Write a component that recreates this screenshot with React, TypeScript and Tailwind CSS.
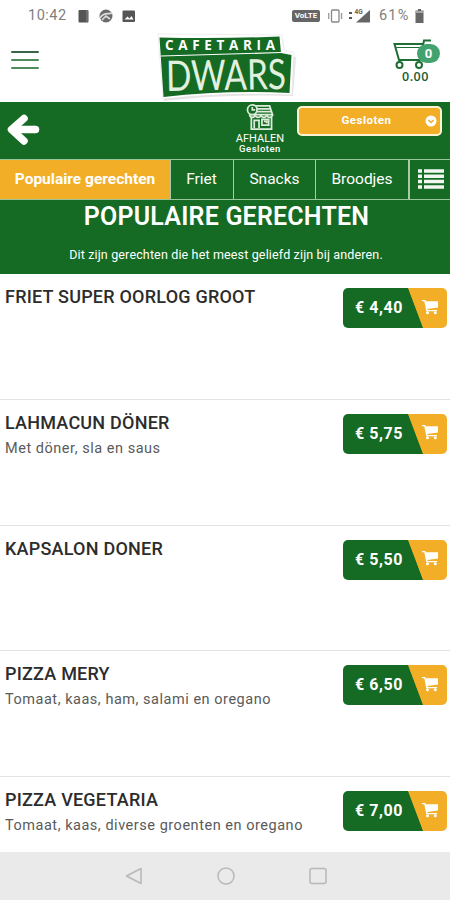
import React from "react";

interface Dish {
  name: string;
  description?: string;
  price: string;
}

const DISHES: Dish[] = [
  { name: "FRIET SUPER OORLOG GROOT", price: "4,40" },
  { name: "LAHMACUN DÖNER", description: "Met döner, sla en saus", price: "5,75" },
  { name: "KAPSALON DONER", price: "5,50" },
  { name: "PIZZA MERY", description: "Tomaat, kaas, ham, salami en oregano", price: "6,50" },
  { name: "PIZZA VEGETARIA", description: "Tomaat, kaas, diverse groenten en oregano", price: "7,00" },
];

function StatusBar() {
  return (
    <div className="flex h-8 items-center justify-between pl-[28px] pr-[26px] text-[#808080]">
      <div className="flex items-center">
        <span className="w-[50px] text-[14.5px] tracking-[0.5px]">10:42</span>
        <svg width="62" height="16" viewBox="0 0 62 16">
          <rect x="0.5" y="2" width="10" height="12.5" rx="1" fill="#555" />
          <path d="M9 2v12.5" stroke="#888" />
          <circle cx="28" cy="8" r="6.5" fill="#6b6b6b" />
          <path d="M22 10c4-7 9-3 12-5M24 12l4-4 4 3" stroke="#ddd" strokeWidth="1.6" fill="none" />
          <rect x="44.5" y="2.5" width="12.5" height="11.5" rx="1" fill="#555" />
          <path d="M46.5 11.5l3-3 2 2 2-2.5 2 3.5z" fill="#fff" />
        </svg>
      </div>
      <div className="flex items-center">
        <span className="mr-[8px] flex h-[12px] w-[28px] items-center justify-center rounded-[2px] bg-[#666] text-[8px] font-bold text-white">VoLTE</span>
        <svg className="mr-[8px]" width="43" height="16" viewBox="0 0 43 16">
          <rect x="3.5" y="2" width="7.5" height="12" rx="1" fill="none" stroke="#888" strokeWidth="1.3" />
          <path d="M0.7 5v6M13.5 5v6" stroke="#999" strokeWidth="1.3" />
          <path d="M21 5h3M21 10h3" stroke="#555" strokeWidth="2" />
          <path d="M42 2v12.5H28z" fill="#666" />
          <text x="26.5" y="6" fontSize="6.5" fontWeight="700" fill="#666">4G</text>
        </svg>
        <span className="mr-[4px] w-[32px] text-[14.5px] tracking-[1.2px]">61%</span>
        <svg width="9" height="14" viewBox="0 0 9 14">
          <path d="M3 0h3v1.5h2.5V14H0.5V1.5H3z" fill="#666" />
          <path d="M1 3h7" stroke="#bbb" strokeWidth="1.5" />
        </svg>
      </div>
    </div>
  );
}

function Logo() {
  return (
    <svg width="142" height="70" viewBox="0 0 142 70">
      <path d="M5 4 128 7 130 22 141 25 138 64Q70 62 9 69z" fill="#000" opacity="0.1" />
      <path d="M3 2 127 3 129 18 139 20 137 63Q70 60 8 67z" fill="#fff" stroke="#ddd" strokeWidth="0.5" />
      <path d="M4.5 5.5Q66 7 124.5 4.5L126 21 136.5 23 134.500 61Q70 58 8.500 65z" fill="#156b24" />
      <path d="M6 24 126 20.500" stroke="#fff" strokeWidth="1.2" />
      <text x="10" y="17.5" textLength="110" lengthAdjust="spacing" fontFamily="'Open Sans', sans-serif" fontWeight="700" fontSize="13.5" fill="#fff">
        CAFETARIA
      </text>
      <text x="11" y="58" textLength="120" lengthAdjust="spacingAndGlyphs" fontFamily="Lato, sans-serif" fontWeight="400" fontSize="42" fill="#e2f0df" transform="rotate(-1 70 45)">
        DWARS
      </text>
    </svg>
  );
}

function CartSummary() {
  return (
    <div className="relative w-[48px]">
      <svg width="48" height="31" viewBox="0 0 48 31">
        <g fill="none" stroke="#1c6e35" strokeWidth="2">
          <path d="M38 1.5h-7l-4 19.5H6L1.5 5H30" />
          <path d="M3 8.5h26" strokeWidth="1" />
          <circle cx="6.5" cy="26" r="3" />
          <circle cx="26" cy="26" r="3" />
        </g>
      </svg>
      <span className="absolute left-[24px] top-[5px] flex h-[19px] w-[23px] items-center justify-center rounded-full bg-[#43a36f] text-[13px] font-bold text-white">0</span>
      <div className="-mt-px ml-[9px] font-['Open_Sans',sans-serif] text-[12.5px] font-semibold leading-[15px] tracking-[0.5px] text-[#1c5b36]">0.00</div>
    </div>
  );
}

function ShopIcon() {
  return (
    <svg width="30" height="26" viewBox="0 0 30 27" fill="none" stroke="#dcecdb" strokeWidth="1.8">
      <path d="M10 2h15l3 9H4M6 13v13h21V13M11 5h15M12 8h15" />
      <path d="M4 11c1 4 5 4 6 0 1 4 5 4 6 0 1 4 5 4 6 0 1 4 5 4 6 0" />
      <path d="M9 25v-8h5v8M17 16h7v6h-7zM19 18h3v2" />
      <circle cx="7" cy="6" r="5" fill="#156b24" />
      <path d="M7 3v3h3" />
    </svg>
  );
}

function PriceButton({ price }: { price: string }) {
  return (
    <button className="flex h-10 w-[104px] shrink-0 items-center justify-between rounded-[5px] bg-[linear-gradient(69.4deg,#156b24_74.5px,#f2ae27_75.3px)] pl-[12px] pr-[9px]">
      <span className="whitespace-nowrap text-[16px] font-bold tracking-[0.55px] text-white">€ {price}</span>
      <svg className="mb-[3px]" width="16" height="16" viewBox="0 0 16 16" fill="#fff">
        <path d="M0 1h3.3l.4 1.3H16v6.2L5.300 9.900l.3 1.100H15v1.300H4.300L2.300 2.300H0z" />
        <circle cx="5.5" cy="13.8" r="1.5" />
        <circle cx="13.3" cy="13.8" r="1.5" />
      </svg>
    </button>
  );
}

export default function App() {
  return (
    <div className="flex h-[900px] w-[450px] flex-col overflow-hidden bg-white font-[Roboto,sans-serif]">
      {/* Header */}
      <StatusBar />
      <header className="flex h-[70px] shrink-0 items-start justify-between">
        <div className="ml-[11px] mt-[19px] flex w-[28px] flex-col gap-[6px]">
          <div className="h-[2px] rounded-full bg-[#3a6648]" />
          <div className="h-[2px] rounded-full bg-[#4f8d5d]" />
          <div className="h-[2px] rounded-full bg-[#4f8d5d]" />
        </div>
        <div className="ml-[116px] mr-auto">
          <Logo />
        </div>
        <div className="mr-[9px] mt-[7px]">
          <CartSummary />
        </div>
      </header>

      {/* Order type */}
      <div className="flex h-[57px] shrink-0 items-start bg-[#156b24] text-white">
        <svg className="ml-[7px] mt-[12px]" width="34" height="32" viewBox="0 0 34 32" fill="none" stroke="#fff" strokeWidth="7.5" strokeLinecap="round">
          <path d="M17 4.5 4.5 15.5 17 27" strokeLinejoin="round" />
          <path d="M6 15.5h22" strokeLinecap="butt" />
          <path d="M28 15.5h.5" />
        </svg>
        <div className="ml-[187px] mt-[2px] flex w-[64px] flex-col items-center">
          <ShopIcon />
          <span className="mt-[3px] text-[11px] leading-[11px]">AFHALEN</span>
          <span className="text-[9.5px] font-medium leading-[9px] tracking-[0.5px]">Gesloten</span>
        </div>
        <div className="relative ml-[5px] mt-[4px] flex h-[30px] w-[145px] items-center justify-center rounded-[5px] border-2 border-[#fbf3d2] bg-[#f2ae27] pr-[6px] text-[11.5px] font-bold tracking-[0.5px]">
          Gesloten
          <svg className="absolute right-[3px] top-[7px]" width="12" height="12" viewBox="0 0 12 12">
            <circle cx="6" cy="6" r="5.5" fill="#fff" />
            <path d="M3.3 5 6 7.5 8.7 5" fill="none" stroke="#f2ae27" strokeWidth="1.5" />
          </svg>
        </div>
      </div>

      {/* Categories */}
      <nav className="flex h-[41px] shrink-0 border-y border-[#9dc59c] bg-[#156b24] text-[15.5px] text-white">
        <div className="flex w-[171px] items-center justify-center border-r border-[#a8cda6] bg-[#f2ae27] font-bold">Populaire gerechten</div>
        <div className="flex w-[63px] items-center justify-center border-r border-[#a8cda6] pr-px">Friet</div>
        <div className="flex w-[82px] items-center justify-center border-r border-[#a8cda6]">Snacks</div>
        <div className="flex w-[94px] items-center justify-center border-r-2 border-[#a8cda6]">Broodjes</div>
        <div className="flex flex-1 items-center justify-center pb-[2px] pl-[2px]">
          <svg width="26" height="20" viewBox="0 0 26 20" stroke="#f1f7ef" strokeWidth="3.5">
            <path d="M0 2h4M6 2h20M0 7.300h4M6 7.300h20M0 12.600h4M6 12.600h20M0 18h4M6 18h20" />
          </svg>
        </div>
      </nav>

      <section className="h-[74px] shrink-0 bg-[#156b24] text-center text-white">
        <h1 className="pl-[3px] pt-[4px] text-[25px] font-semibold leading-[26px] tracking-[0.2px]">POPULAIRE GERECHTEN</h1>
        <p className="mt-[17px] pl-[2px] text-[12.5px] leading-4 tracking-[0.15px]">Dit zijn gerechten die het meest geliefd zijn bij anderen.</p>
      </section>

      {/* Dishes */}
      <main className="min-h-0 flex-1 overflow-hidden">
        {DISHES.map((dish) => (
          <div key={dish.name} className="flex h-[125.8px] items-start justify-between border-b-[1.5px] border-[#e3e3e3] pl-[5px] pr-[3px] pt-[13px]">
            <div>
              <h2 className="text-[18px] font-medium leading-[20px] tracking-[0.22px] text-[#2c2c2c]">{dish.name}</h2>
              {dish.description && (
                <p className="mt-[7px] text-[14.5px] leading-[18px] tracking-[0.53px] text-[#5a5a5a]">{dish.description}</p>
              )}
            </div>
            <div className="mt-px">
              <PriceButton price={dish.price} />
            </div>
          </div>
        ))}
      </main>

      {/* Android navigation */}
      <footer className="flex h-[48px] shrink-0 items-center justify-center gap-[74px] bg-[#eaeaea] pl-px">
        <svg width="18" height="18" viewBox="0 0 18 18" fill="none" stroke="#b8b8b8" strokeWidth="1.5" strokeLinejoin="round">
          <path d="M16 1.5v15L1.5 9z" />
        </svg>
        <svg width="18" height="18" viewBox="0 0 18 18" fill="none" stroke="#b8b8b8" strokeWidth="1.5">
          <circle cx="9" cy="9" r="8" />
        </svg>
        <svg width="18" height="18" viewBox="0 0 18 18" fill="none" stroke="#b8b8b8" strokeWidth="1.5">
          <rect x="1" y="1.5" width="16" height="15" rx="2" />
        </svg>
      </footer>
    </div>
  );
}
